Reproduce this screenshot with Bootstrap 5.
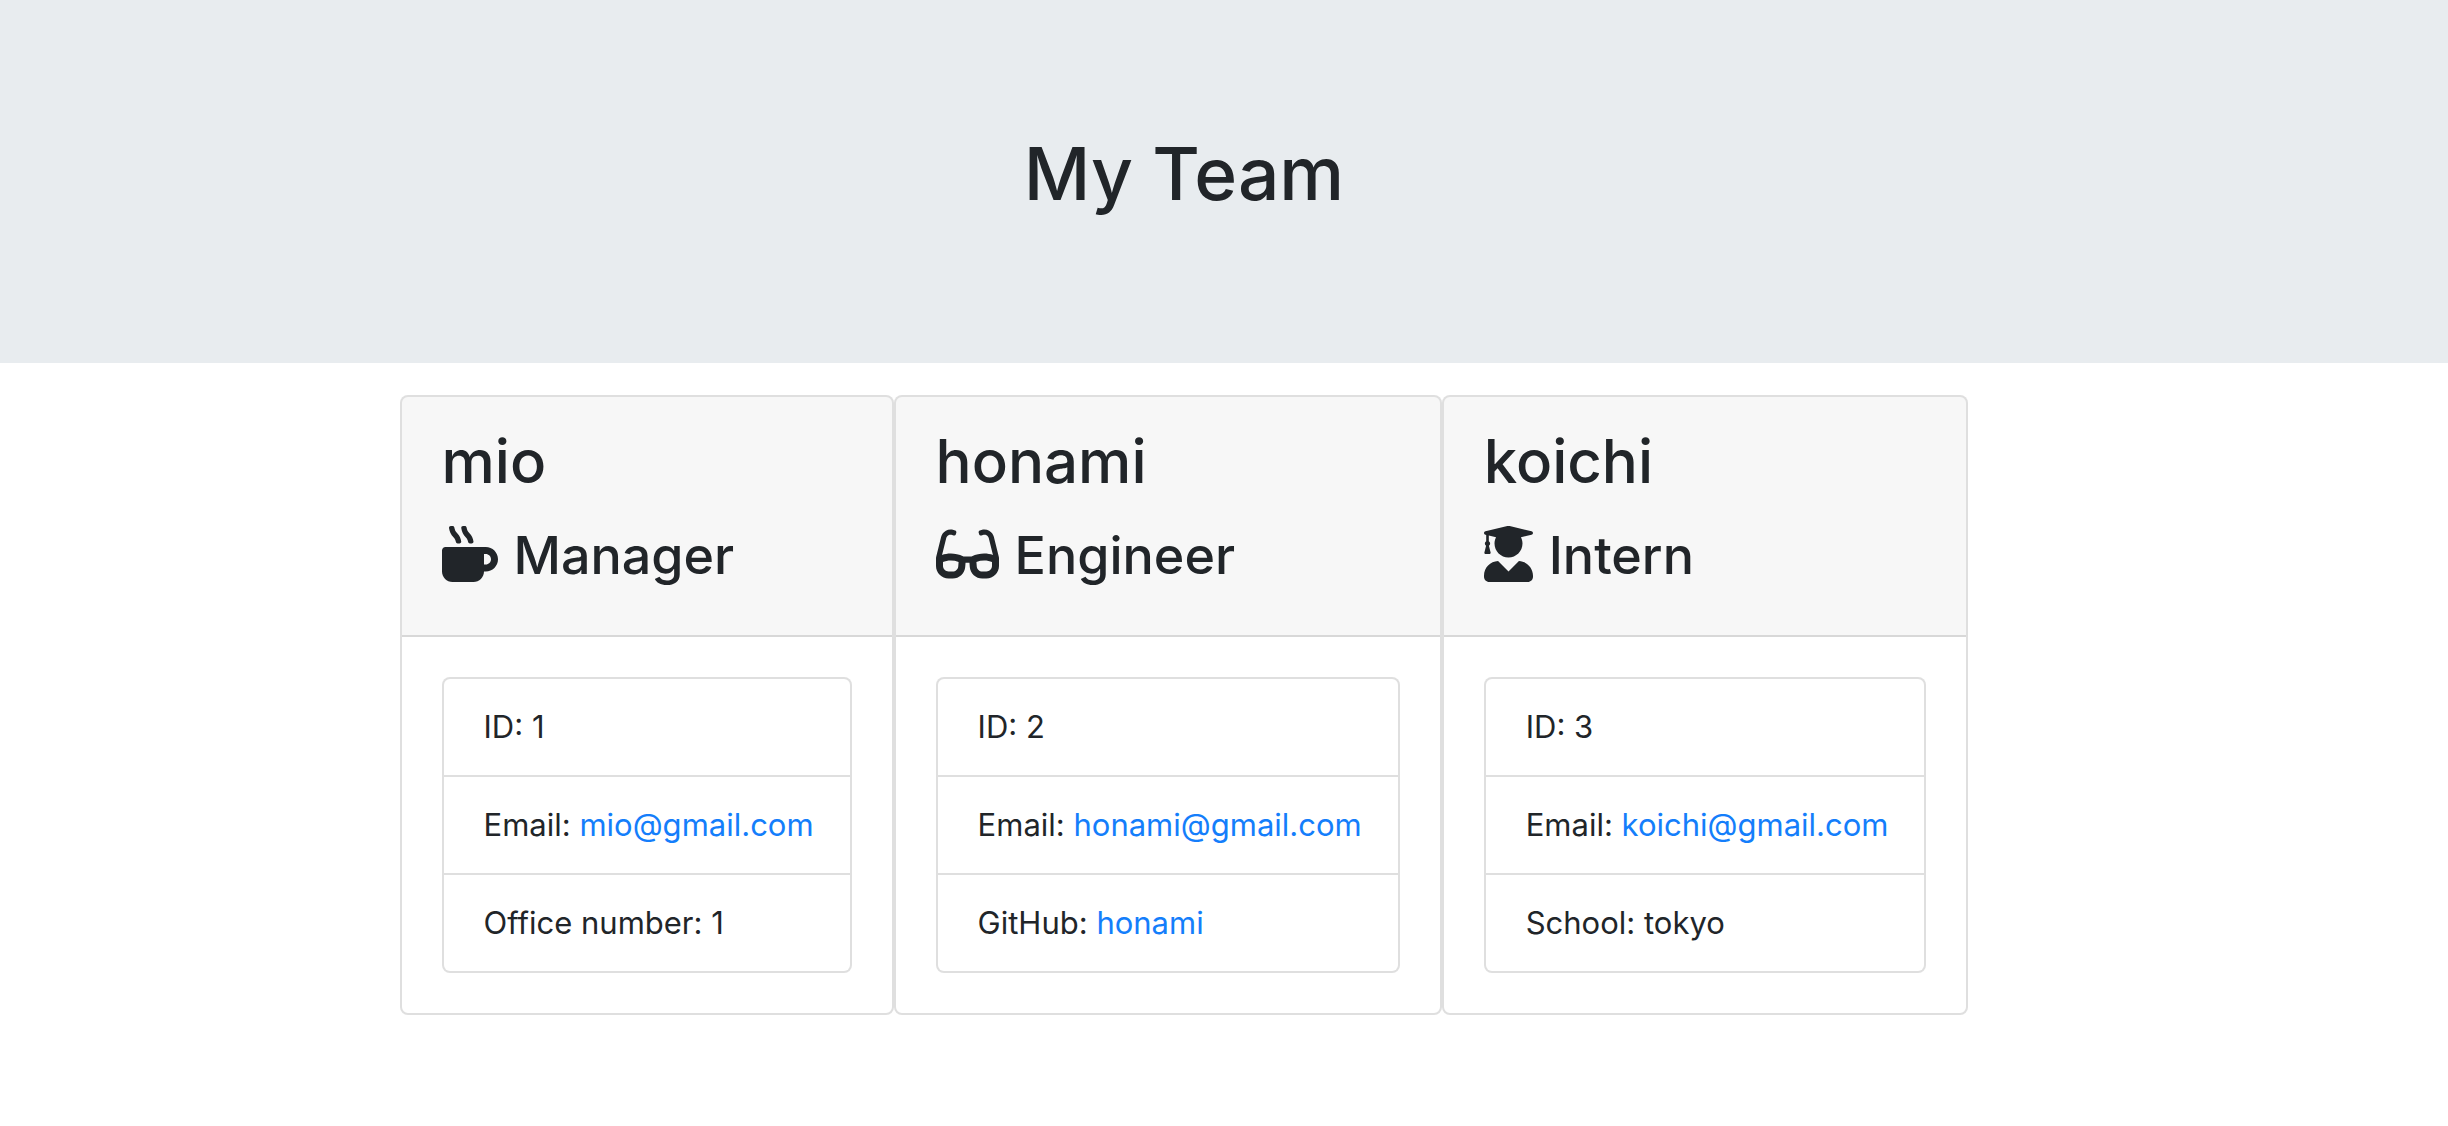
<!DOCTYPE html>
<html lang="en">
<head>
<meta charset="utf-8">
<meta name="viewport" content="width=device-width, initial-scale=1">
<title>My Team</title>
<link rel="stylesheet" href="https://cdn.jsdelivr.net/npm/bootstrap@5.3.0/dist/css/bootstrap.min.css">
<style>
  body { font-family: Inter, "Liberation Sans", sans-serif; font-size: 31px; line-height: 48px; color: #212529; background: #fff; }
  h1, h2, h3 { font-weight: 500; }
  a { color: #147efb; text-decoration: none; }
  a:hover { text-decoration: underline; }
  .team-banner { background: #e8ecef; padding: 126px 80px 125px 0; margin-bottom: 32px; }
  .team-banner h1 { font-size: 73px; line-height: 96px; margin-bottom: 16px; }
  .team-list { padding-right: 80px; }
  .team-card { --bs-card-border-width: 2px; --bs-card-border-color: rgba(0,0,0,.125); --bs-card-border-radius: 8px; --bs-card-inner-border-radius: 6px; --bs-card-cap-padding-x: 40px; --bs-card-cap-padding-y: 24px; --bs-card-cap-bg: rgba(0,0,0,.03); --bs-card-spacer-x: 40px; --bs-card-spacer-y: 40px; }
  .team-card h2 { font-size: 60px; line-height: 80px; margin-bottom: 14px; }
  .team-card h3 { font-size: 52px; line-height: 82px; margin-bottom: 14px; }
  .team-card .list-group { --bs-list-group-border-width: 2px; --bs-list-group-border-color: rgba(0,0,0,.125); --bs-list-group-border-radius: 8px; --bs-list-group-item-padding-x: 40px; --bs-list-group-item-padding-y: 24px; --bs-list-group-color: #212529; }
  .team-card .list-group-item { padding-right: 36px; }
  .role-icon { height: 56px; margin: 0 16px 4px 0; fill: currentColor; }
</style>
<script src="https://cdn.jsdelivr.net/npm/bootstrap@5.3.0/dist/js/bootstrap.bundle.min.js" defer></script>
</head>
<body>
<header class="team-banner text-center">
  <h1>My Team</h1>
</header>
<main class="team-list d-flex flex-wrap justify-content-center">
  <section class="card team-card">
    <div class="card-header">
      <h2>mio</h2>
      <h3 class="d-flex align-items-center"><svg class="role-icon" viewBox="0 0 512 512" aria-hidden="true"><path d="M127.1 146.5c1.3 7.7 8 13.5 16 13.5h16.5c9.8 0 17.6-8.5 16.3-18-3.8-28.2-16.4-54.2-36.6-74.7-14.4-14.7-23.6-33.3-26.4-53.5C111.8 5.9 105 0 96.8 0H80.4C70.6 0 63 8.5 64.1 18c3.9 31.9 18 61.3 40.6 84.4 12 12.2 19.7 27.5 22.4 44.1zm112 0c1.3 7.7 8 13.5 16 13.5h16.5c9.8 0 17.6-8.5 16.3-18-3.8-28.2-16.4-54.2-36.6-74.7-14.4-14.7-23.6-33.3-26.4-53.5C223.8 5.9 217 0 208.8 0h-16.4c-9.8 0-17.5 8.5-16.3 18 3.9 31.9 18 61.3 40.6 84.4 12 12.2 19.7 27.5 22.4 44.1zM400 192H32c-17.7 0-32 14.3-32 32v192c0 53 43 96 96 96h192c53 0 96-43 96-96h16c61.8 0 112-50.2 112-112s-50.2-112-112-112zm0 160h-16v-96h16c26.5 0 48 21.5 48 48s-21.5 48-48 48z"/></svg>Manager</h3>
    </div>
    <div class="card-body">
      <ul class="list-group">
        <li class="list-group-item">ID: 1</li>
        <li class="list-group-item">Email: <a href="mailto:mio@gmail.com">mio@gmail.com</a></li>
        <li class="list-group-item">Office number: 1</li>
      </ul>
    </div>
  </section>
  <section class="card team-card">
    <div class="card-header">
      <h2>honami</h2>
      <h3 class="d-flex align-items-center"><svg class="role-icon" viewBox="0 0 576 512" aria-hidden="true"><path d="M574.1 280.37L528.75 98.66c-5.91-23.7-21.59-44.05-43-55.81-21.44-11.73-46.97-14.11-70.19-6.33l-15.25 5.08c-8.39 2.79-12.92 11.86-10.12 20.24l5.06 15.18c2.79 8.38 11.85 12.91 20.23 10.12l13.18-4.39c10.87-3.62 23-3.57 33.16 1.73 10.29 5.37 17.57 14.56 20.37 25.82l38.46 153.82c-22.19-6.81-49.79-12.46-81.2-12.46-34.77 0-73.98 7.02-114.85 26.74h-73.18c-40.87-19.74-80.08-26.75-114.86-26.75-31.42 0-59.02 5.65-81.21 12.46l38.46-153.83c2.79-11.25 10.09-20.45 20.38-25.81 10.16-5.3 22.28-5.35 33.15-1.73l13.17 4.39c8.38 2.79 17.44-1.74 20.23-10.12l5.06-15.18c2.8-8.38-1.73-17.45-10.12-20.24l-15.25-5.08c-23.22-7.78-48.75-5.41-70.19 6.33-21.41 11.77-37.09 32.11-43 55.8L1.9 280.37A64.218 64.218 0 0 0 0 295.86v70.25C0 429.01 51.58 480 115.2 480h37.12c60.28 0 110.37-45.94 114.88-105.37l2.93-38.63h35.75l2.93 38.63C313.31 434.06 363.4 480 423.68 480h37.12c63.62 0 115.2-50.99 115.2-113.88v-70.25c0-5.23-.64-10.43-1.9-15.5zm-370.72 89.42c-1.97 25.91-24.4 46.21-51.06 46.21H115.2C86.97 416 64 393.62 64 366.11v-37.54c18.12-6.49 43.42-12.92 72.58-12.92 23.86 0 47.26 4.33 69.93 12.92l-3.13 41.22zM512 366.12c0 27.51-22.97 49.88-51.2 49.88h-37.12c-26.67 0-49.1-20.3-51.06-46.21l-3.13-41.22c22.67-8.59 46.08-12.92 69.95-12.92 29.12 0 54.43 6.44 72.55 12.93v37.54z"/></svg>Engineer</h3>
    </div>
    <div class="card-body">
      <ul class="list-group">
        <li class="list-group-item">ID: 2</li>
        <li class="list-group-item">Email: <a href="mailto:honami@gmail.com">honami@gmail.com</a></li>
        <li class="list-group-item">GitHub: <a href="https://github.com/honami">honami</a></li>
      </ul>
    </div>
  </section>
  <section class="card team-card">
    <div class="card-header">
      <h2>koichi</h2>
      <h3 class="d-flex align-items-center"><svg class="role-icon" viewBox="0 0 448 512" aria-hidden="true"><path d="M319.4 320.6L224 416l-95.4-95.4C57.1 323.7 0 382.2 0 454.4v9.6c0 26.5 21.5 48 48 48h352c26.5 0 48-21.5 48-48v-9.6c0-72.2-57.1-130.7-128.6-133.8zM13.6 79.8l6.4 1.5v58.4c-7 4.2-12 11.5-12 20.3 0 8.4 4.6 15.4 11.1 19.7L3.5 242c-1.7 6.9 2.1 14 7.6 14h41.8c5.5 0 9.3-7.1 7.6-14l-15.6-62.3C51.4 175.4 56 168.4 56 160c0-8.8-5-16.1-12-20.3V87.1l66 15.9c-8.6 17.2-14 36.4-14 57 0 70.7 57.3 128 128 128s128-57.3 128-128c0-20.6-5.3-39.8-14-57l96.3-23.2c18.2-4.4 18.2-27.1 0-31.5l-190.4-46c-13-3.1-26.7-3.1-39.7 0L13.6 48.2c-18.1 4.4-18.1 27.2 0 31.6z"/></svg>Intern</h3>
    </div>
    <div class="card-body">
      <ul class="list-group">
        <li class="list-group-item">ID: 3</li>
        <li class="list-group-item">Email: <a href="mailto:koichi@gmail.com">koichi@gmail.com</a></li>
        <li class="list-group-item">School: tokyo</li>
      </ul>
    </div>
  </section>
</main>
</body>
</html>
